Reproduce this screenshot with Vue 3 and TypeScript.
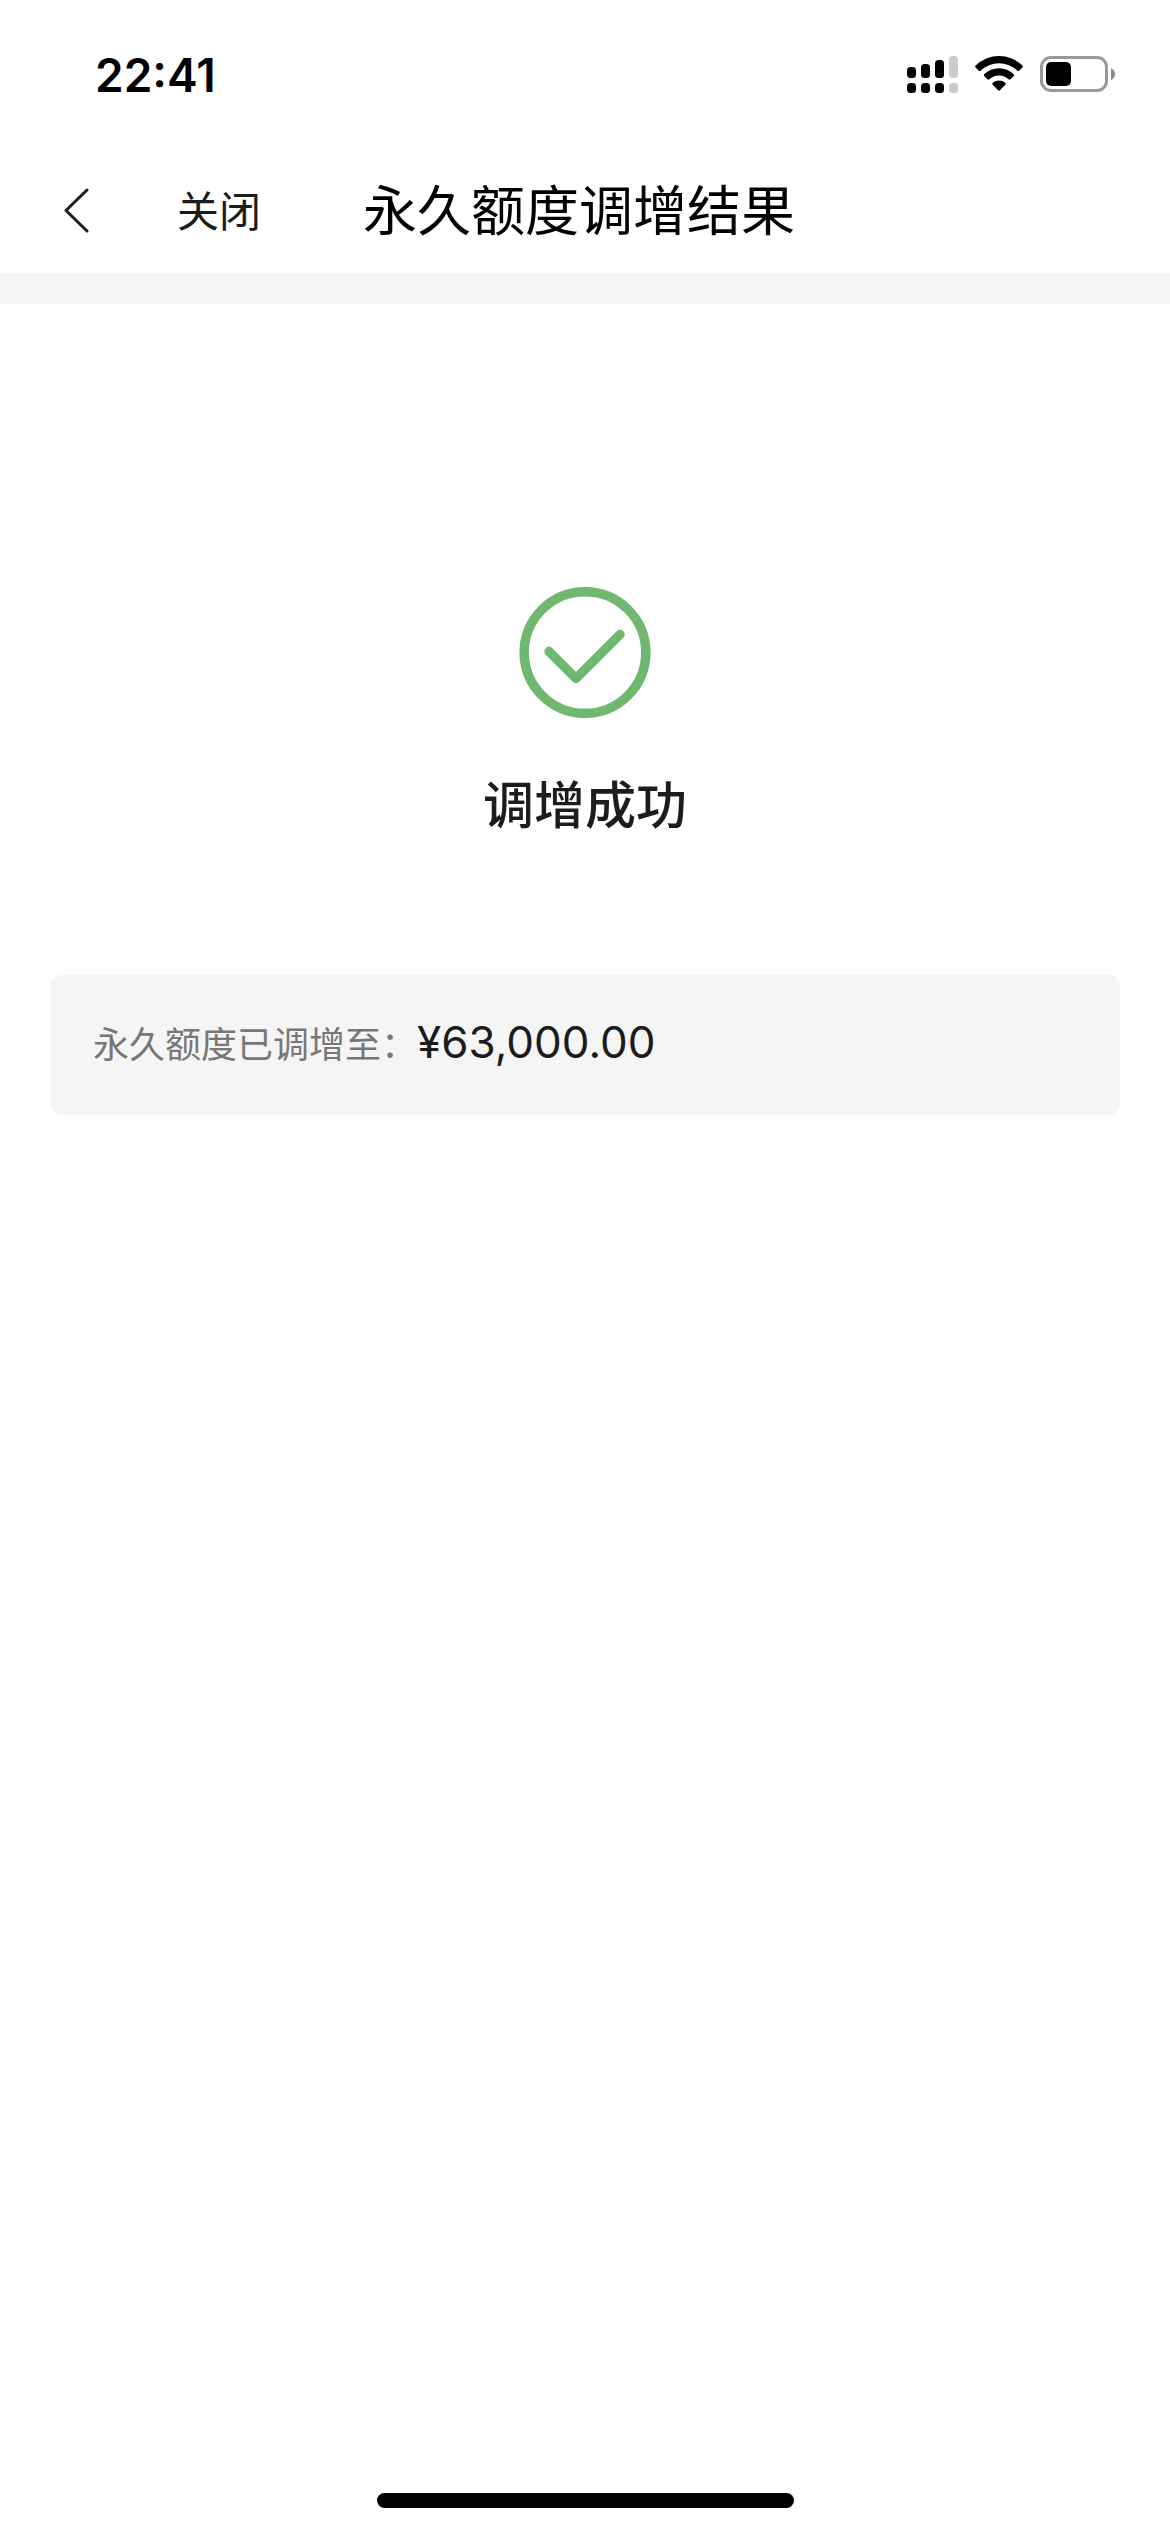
<script setup lang="ts">
interface SignalBar {
  x: number
  top: number
  active: boolean
}

const time = '22:41'
const title = '永久额度调增结果'
const resultText = '调增成功'
const limitLabel = '永久额度已调增至：'
const newLimit = 63000

const bars: SignalBar[] = [
  { x: 0, top: 11, active: true },
  { x: 14, top: 8, active: true },
  { x: 28, top: 4, active: true },
  { x: 42, top: 0, active: false },
]

const formatAmount = (value: number): string =>
  '¥' + value.toLocaleString('en-US', { minimumFractionDigits: 2 })
</script>

<template>
  <div class="screen">
    <div class="status-bar">
      <time class="clock">{{ time }}</time>
      <div class="indicators">
        <svg class="signal" width="51" height="38" viewBox="0 0 51 38" aria-hidden="true">
          <g v-for="bar in bars" :key="bar.x" :fill="bar.active ? '#000' : '#cbcbcb'">
            <rect :x="bar.x" :y="bar.top" width="9" :height="22 - bar.top" rx="3.5" />
            <rect :x="bar.x" y="27" width="9" height="10" rx="3.5" />
          </g>
        </svg>
        <svg class="wifi" width="48" height="38" viewBox="0 0 48 38" aria-hidden="true">
          <path d="M0.6 9.6a33.5 33.5 0 0 1 46.8 0q.9.9 0 1.8l-3.2 3.3q-.9.9-1.8 0a26.5 26.5 0 0 0-36.8 0q-.9.9-1.8 0l-3.2-3.3q-.9-.9 0-1.8z" />
          <path d="M9.2 18.2a21.3 21.3 0 0 1 29.6 0q.9.9 0 1.8l-3.3 3.3q-.9.8-1.8 0a14.2 14.2 0 0 0-19.4 0q-.9.8-1.8 0l-3.3-3.3q-.9-.9 0-1.8z" />
          <path d="M17.7 26.8a9.4 9.4 0 0 1 12.6 0q1 .9 0 1.9l-5.4 5.5q-.9.9-1.8 0l-5.4-5.5q-1-1 0-1.9z" />
        </svg>
        <svg class="battery" width="76" height="38" viewBox="0 0 76 38" aria-hidden="true">
          <rect x="1.5" y="1.5" width="65" height="33" rx="9.5" fill="none" stroke="#999" stroke-width="3" />
          <rect x="6" y="6" width="25" height="24" rx="5" />
          <path d="M71 12q4 2 4 6t-4 6z" fill="#8c8c8c" />
        </svg>
      </div>
    </div>

    <header class="nav">
      <button class="back" type="button" aria-label="返回">
        <svg width="28" height="48" viewBox="0 0 28 48" aria-hidden="true">
          <path d="M25 2L4 22.5L25 43" fill="none" stroke="#1c1c1c" stroke-width="3" stroke-linecap="round" stroke-linejoin="round" />
        </svg>
      </button>
      <button class="close" type="button">关闭</button>
      <h1 class="title">{{ title }}</h1>
    </header>

    <main class="content">
      <section class="result">
        <svg width="132" height="132" viewBox="0 0 132 132" aria-hidden="true">
          <g fill="none" stroke="#70b870" stroke-width="9.5" stroke-linecap="round" stroke-linejoin="round">
            <circle cx="66" cy="66.5" r="60.8" />
            <path d="M30 65.500L57 92.500L101 48.500" />
          </g>
        </svg>
        <h2 class="result-text">{{ resultText }}</h2>
      </section>
      <section class="limit-card">
        <span class="limit-label">{{ limitLabel }}</span>
        <span class="limit-amount">{{ formatAmount(newLimit) }}</span>
      </section>
    </main>

    <div class="home-indicator"></div>
  </div>
</template>

<style>
body {
  margin: 0;
  background: #fff;
}
</style>

<style scoped>
.screen {
  display: flex;
  flex-direction: column;
  min-height: 100vh;
  background: #fff;
  color: #1c1c1c;
  font-family: Inter, "Noto Sans CJK SC", sans-serif;
}

.status-bar {
  display: flex;
  align-items: center;
  justify-content: space-between;
  height: 150px;
  padding: 0 54px 0 95px;
  box-sizing: border-box;
}

.clock {
  color: #000;
  font-size: 46px;
  font-weight: 600;
  line-height: 56px;
}

.indicators {
  display: flex;
  gap: 17px;
}

.nav {
  display: flex;
  align-items: center;
  height: 123px;
  padding: 0 62px;
  box-sizing: border-box;
}

.back,
.close {
  padding: 0;
  border: 0;
  background: none;
  color: inherit;
  font-family: inherit;
}

.back {
  display: flex;
}

.close {
  margin-left: 87px;
  font-size: 42px;
  line-height: 60px;
}

.title {
  margin: 0 0 0 102px;
  color: #000;
  font-size: 54px;
  font-weight: 400;
  line-height: 78px;
}

.content {
  flex: 1;
  padding: 0 50px;
  border-top: 31px solid #f5f5f5;
}

.result {
  display: flex;
  flex-direction: column;
  align-items: center;
  padding: 282px 0 132px;
}

.result-text {
  margin: 50px 0 0;
  font-size: 51px;
  font-weight: 500;
  line-height: 75px;
}

.limit-card {
  display: flex;
  align-items: baseline;
  padding: 37px 43px 40px;
  border-radius: 12px;
  background: #f5f5f5;
}

.limit-label {
  color: #777;
  font-size: 36px;
  line-height: 60px;
}

.limit-amount {
  font-size: 44px;
  line-height: 60px;
}

.home-indicator {
  width: 417px;
  height: 15px;
  margin: 0 auto 24px;
  border-radius: 8px;
  background: #000;
}
</style>
